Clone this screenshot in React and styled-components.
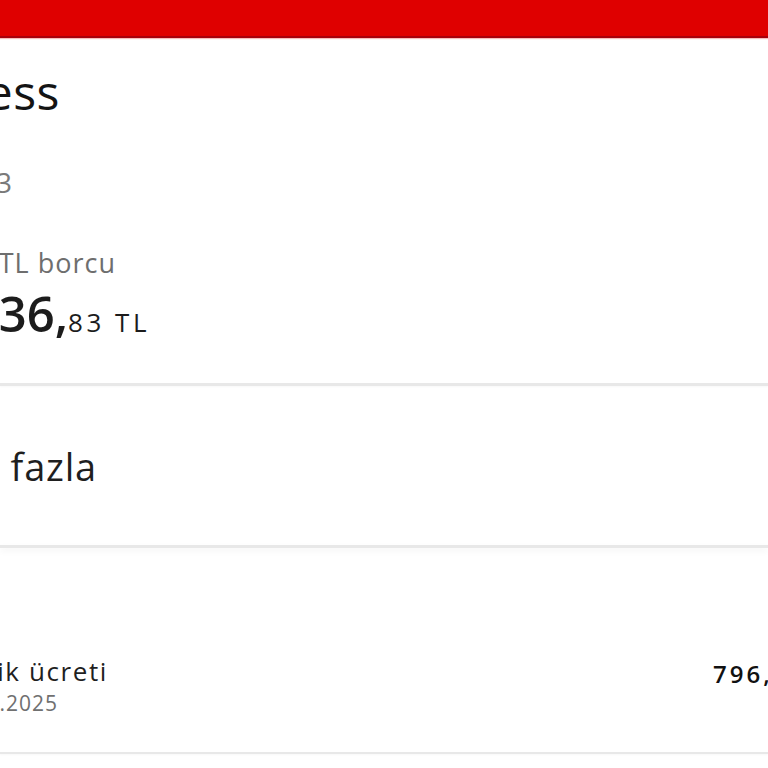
import React from "react";
import styled, { createGlobalStyle } from "styled-components";

const GlobalStyle = createGlobalStyle`
  html, body {
    margin: 0;
    padding: 0;
    background: #ffffff;
  }
  body {
    font-family: "Open Sans", "Noto Sans", sans-serif;
    color: #1a1a1a;
  }
`;

const App = () => {
  return (
    <>
      <GlobalStyle />
      <Screen>
        <TopBar />
        <Card $height={345} $pad="30px 0 0">
          <Clip $end={60}>
            <Title>Red Business</Title>
          </Clip>
          <Clip $end={12} $top={52}>
            <Meta>0532 123 45 63</Meta>
          </Clip>
          <Clip $end={116} $top={53}>
            <DebtLabel>Toplam TL borcu</DebtLabel>
          </Clip>
          <Clip $end={150} $top={13}>
            <Amount>
              1.236,<small>83 TL</small>
            </Amount>
          </Clip>
        </Card>
        <Divider />
        <Card $height={159} $center>
          <Clip $end={97}>
            <MoreLink>Daha fazla</MoreLink>
          </Clip>
        </Card>
        <Divider $shadow />
        <Card $height={204} $pad="110px 0 0">
          <ChargeRow>
            <ChargeInfo>
              <Clip $end={108}>
                <ChargeName>Abonelik ücreti</ChargeName>
              </Clip>
              <Clip $end={58} $top={9}>
                <ChargeDate>01.01.2025</ChargeDate>
              </Clip>
            </ChargeInfo>
            <PriceClip>
              <Price>796,00 TL</Price>
            </PriceClip>
          </ChargeRow>
        </Card>
        <Divider $thin />
      </Screen>
    </>
  );
};

export default App;

const Screen = styled.div`
  width: 768px;
  height: 768px;
  overflow: hidden;
  display: flex;
  flex-direction: column;
  background: #ffffff;
`;

const TopBar = styled.div`
  flex: none;
  height: 36px;
  background: #df0000;
  border-bottom: 2px solid #a8000c;
  box-shadow: 0 1px 1px rgba(230, 60, 60, 0.35);
  position: relative;
  z-index: 1;
`;

const Card = styled.section`
  flex: none;
  box-sizing: border-box;
  height: ${(p) => p.$height}px;
  padding: ${(p) => p.$pad || "0"};
  background: #ffffff;
  display: flex;
  flex-direction: column;
  justify-content: ${(p) => (p.$center ? "center" : "flex-start")};
`;

const Divider = styled.div`
  flex: none;
  height: ${(p) => (p.$thin ? 2 : 3)}px;
  background: #e8e8e8;
  box-shadow: ${(p) =>
    p.$shadow ? "0 3px 6px rgba(0, 0, 0, 0.06)" : "0 1px 2px rgba(0, 0, 0, 0.03)"};
  position: relative;
`;

/* the app column begins left of the visible area: each line keeps its right end */
const Clip = styled.div`
  flex: none;
  width: ${(p) => p.$end}px;
  margin-top: ${(p) => p.$top || 0}px;
  display: flex;
  justify-content: flex-end;
  overflow: hidden;
  white-space: nowrap;
`;

const Title = styled.h1`
  margin: 0;
  font-size: 48px;
  line-height: 48px;
  font-weight: 500;
  color: #141414;
  letter-spacing: 0.5px;
`;

const Meta = styled.div`
  font-size: 28px;
  line-height: 28px;
  color: #7a7a7a;
`;

const DebtLabel = styled.div`
  font-size: 27px;
  line-height: 27px;
  color: #6e6e6e;
  letter-spacing: 1px;
`;

const Amount = styled.div`
  font-size: 49px;
  line-height: 49px;
  font-weight: 600;
  color: #1c1c1c;
  letter-spacing: 0;

  small {
    font-size: 26px;
    font-weight: 500;
    letter-spacing: 3.5px;
  }
`;

const MoreLink = styled.div`
  font-size: 38px;
  line-height: 38px;
  font-weight: 500;
  color: #1f1f1f;
  letter-spacing: 0.8px;
`;

const ChargeRow = styled.div`
  display: flex;
  align-items: flex-start;
`;

const ChargeInfo = styled.div`
  display: flex;
  flex-direction: column;
`;

const ChargeName = styled.div`
  font-size: 26px;
  line-height: 26px;
  font-weight: 500;
  color: #1f1f1f;
  letter-spacing: 1.6px;
`;

const ChargeDate = styled.div`
  font-size: 21px;
  line-height: 21px;
  color: #707070;
  letter-spacing: 1px;
`;

const PriceClip = styled.div`
  margin-left: auto;
  margin-top: 4px;
  width: 55px;
  overflow: hidden;
  white-space: nowrap;
`;

const Price = styled.div`
  font-size: 24px;
  line-height: 24px;
  font-weight: 600;
  color: #111111;
  letter-spacing: 3px;
`;
